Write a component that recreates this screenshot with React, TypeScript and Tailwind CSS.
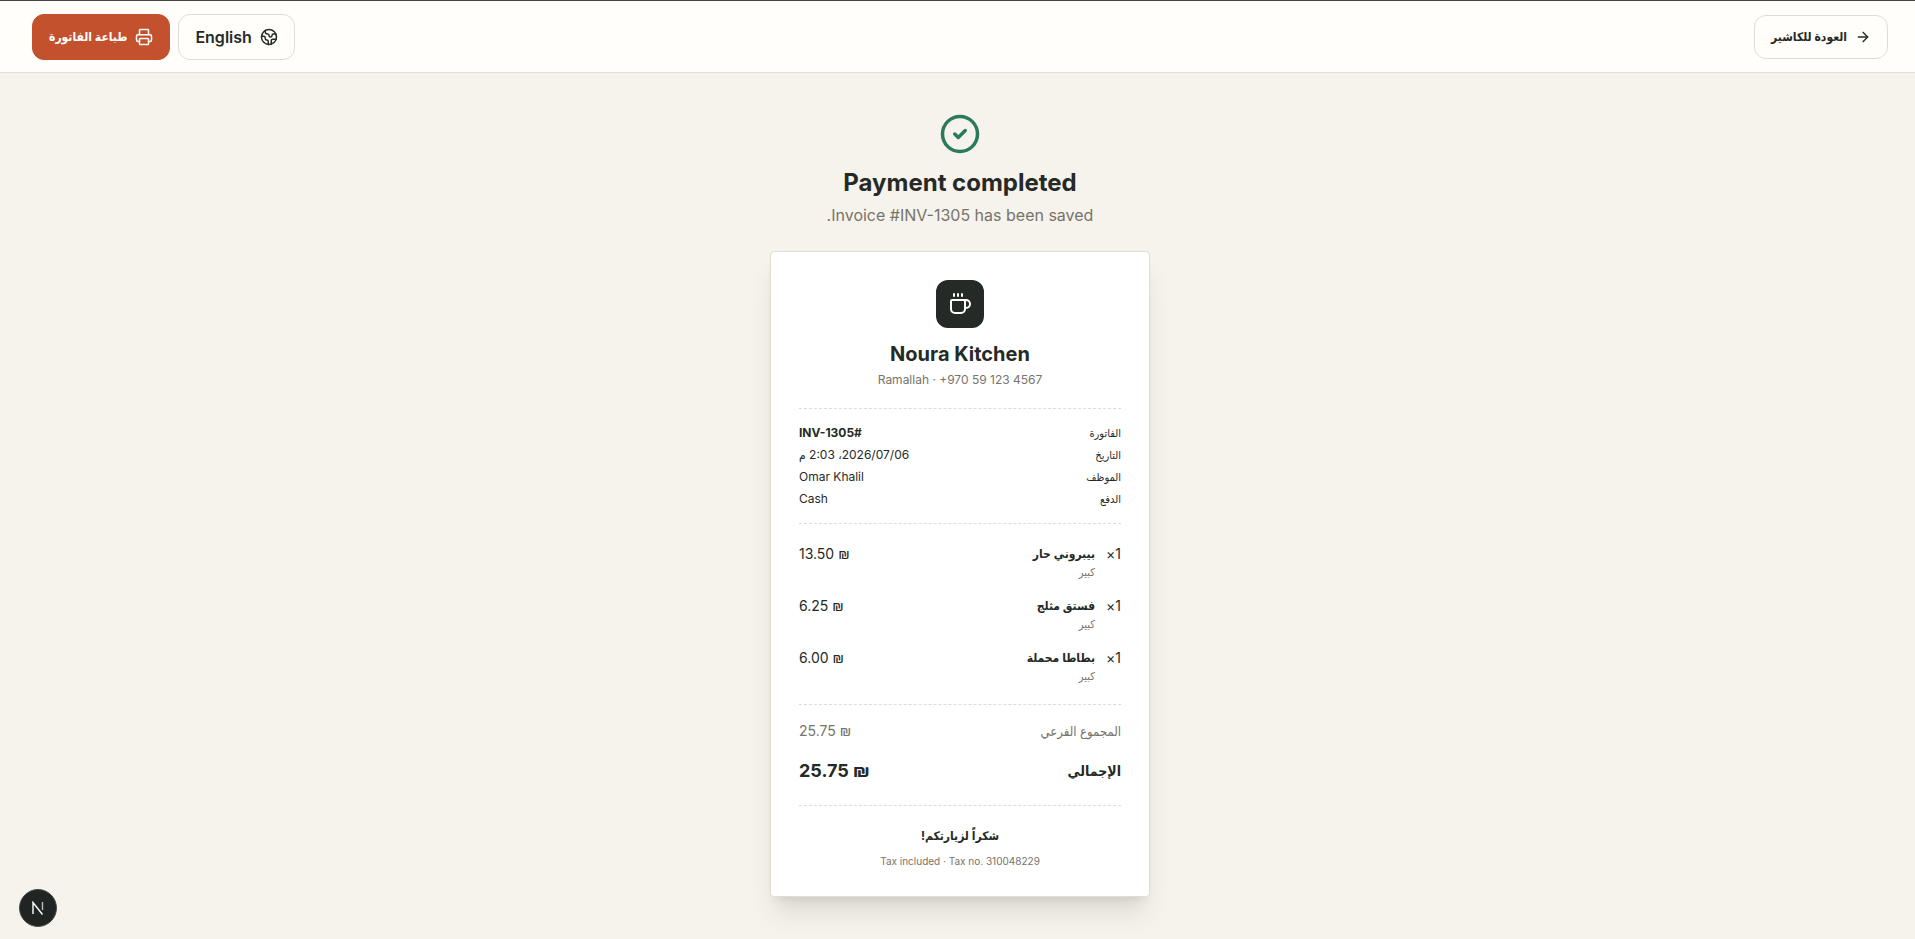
import React from "react";
import { ArrowRight, CircleCheck, Coffee, Earth, Printer } from "lucide-react";

const details = [
  { label: "الفاتورة", value: "#INV-1305", strong: true },
  { label: "التاريخ", value: "06‏/07‏/2026، 2:03 م" },
  { label: "الموظف", value: "Omar Khalil" },
  { label: "الدفع", value: "Cash" },
];

const items = [
  { name: "بيبروني حار", size: "كبير", price: "13.50 ₪" },
  { name: "فستق مثلج", size: "كبير", price: "6.25 ₪" },
  { name: "بطاطا محملة", size: "كبير", price: "6.00 ₪" },
];

export default function App() {
  return (
    <div
      dir="rtl"
      className="min-h-screen bg-[#f6f3ec] font-['Inter','DejaVu_Sans_Condensed','DejaVu_Sans',sans-serif] text-[#252a27]"
    >
      <header className="flex items-center justify-between border-t border-b border-t-[#444444] border-b-[#e2ddd0] bg-[#fffefa] pt-[13px] pr-[27px] pb-3 pl-8">
        <a
          href="#cashier"
          className="flex h-11 items-center gap-2 rounded-xl border border-[#dfddd5] px-4 text-xs font-bold"
        >
          <ArrowRight size={16} />
          العودة للكاشير
        </a>
        <div className="flex gap-2">
          <button
            type="button"
            className="flex h-[46px] items-center gap-2 rounded-xl border border-[#dfddd5] px-4 text-base font-semibold"
          >
            <Earth size={18} />
            English
          </button>
          <button
            type="button"
            className="flex h-[46px] items-center gap-2 rounded-xl border border-[#c4512d] bg-[#c4512d] px-4 text-xs font-bold text-white"
          >
            <Printer size={18} />
            طباعة الفاتورة
          </button>
        </div>
      </header>

      <main className="flex flex-col items-center pt-10 pb-10 pl-[5px]">
        <CircleCheck size={42} className="text-[#2b7a5c]" />
        <h1 className="mt-3 text-2xl leading-8 font-bold">Payment completed</h1>
        <p className="mt-1 text-base leading-6 text-[#77736b]">Invoice #INV-1305 has been saved.</p>

        <section className="mt-6 w-[380px] max-w-full rounded border border-[#e2ddd0] bg-white p-7 shadow-xl">
          <div className="flex flex-col items-center pb-5">
            <div className="flex size-12 items-center justify-center rounded-xl bg-[#252a27] text-white">
              <Coffee size={24} />
            </div>
            <h2 className="mt-3 text-xl leading-7 font-bold">Noura Kitchen</h2>
            <p className="mt-1 text-xs leading-4 text-[#77736b]">
              <bdi>Ramallah · +970 59 123 4567</bdi>
            </p>
          </div>

          <dl className="flex flex-col gap-1.5 border-y border-dashed border-[#dfddd5] py-4 text-xs leading-4">
            {details.map((d) => (
              <div key={d.label} className="flex h-4 justify-between">
                <dt className="text-[11px] leading-4">{d.label}</dt>
                <dd className={d.strong ? "font-bold" : ""}>{d.value}</dd>
              </div>
            ))}
          </dl>

          <ul className="flex flex-col gap-4 py-5">
            {items.map((item) => (
              <li key={item.name} className="flex h-9 text-sm leading-5">
                <span className="w-[26px]">1×</span>
                <div className="grow">
                  <p className="h-5 text-xs leading-5 font-bold">{item.name}</p>
                  <p className="text-[11px] leading-4 text-[#77736b]">{item.size}</p>
                </div>
                <span dir="ltr">{item.price}</span>
              </li>
            ))}
          </ul>

          <div className="flex flex-col gap-4 border-y border-dashed border-[#dfddd5] pt-4 pb-5">
            <div className="flex h-5 justify-between text-sm leading-5 text-[#77736b]">
              <span className="text-[13px] leading-5">المجموع الفرعي</span>
              <span dir="ltr">25.75 ₪</span>
            </div>
            <div className="flex h-7 justify-between text-lg leading-7 font-bold">
              <span className="text-sm leading-7">الإجمالي</span>
              <span dir="ltr">25.75 ₪</span>
            </div>
          </div>

          <footer className="pt-5 text-center">
            <p className="h-5 text-xs leading-5 font-bold">شكراً لزيارتكم!</p>
            <p className="mt-2 text-[10px] leading-[14px] text-[#77736b]">Tax included · Tax no. 310048229</p>
          </footer>
        </section>
      </main>

      <button
        type="button"
        aria-label="Open developer tools"
        className="fixed bottom-3 left-[19px] flex size-[38px] items-center justify-center rounded-full border border-[#4a4c4b] bg-[#202422] text-white"
      >
        <svg viewBox="0 0 14 14" fill="none" stroke="currentColor" strokeWidth="1.4" className="size-[14px]" aria-hidden>
          <path d="M2 13V1.500L11.500 13.500" />
          <path d="M11.500 1v8" strokeOpacity="0.7" />
        </svg>
      </button>
    </div>
  );
}
